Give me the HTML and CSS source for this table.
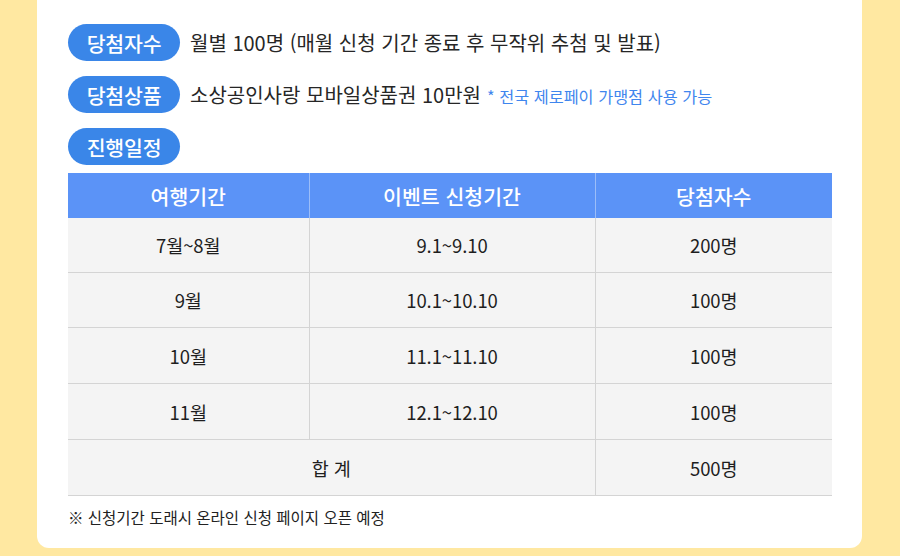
FILE: index.html
```html
<!DOCTYPE html>
<html lang="ko">
<head>
<meta charset="utf-8">
<link rel="stylesheet" href="styles.css">
</head>
<body>
<div class="card">
  <div class="info">
    <span class="badge">당첨자수</span>
    <span class="info-text">월별 100명 (매월 신청 기간 종료 후 무작위 추첨 및 발표)</span>
  </div>
  <div class="info">
    <span class="badge">당첨상품</span>
    <span class="info-text">소상공인사랑 모바일상품권 10만원</span>
    <span class="note">* 전국 제로페이 가맹점 사용 가능</span>
  </div>
  <div class="info last">
    <span class="badge">진행일정</span>
  </div>
  <table class="schedule">
    <colgroup>
      <col class="c1"><col class="c2"><col class="c3">
    </colgroup>
    <thead>
      <tr><th>여행기간</th><th>이벤트 신청기간</th><th>당첨자수</th></tr>
    </thead>
    <tbody>
      <tr class="r1"><td>7월~8월</td><td>9.1~9.10</td><td>200명</td></tr>
      <tr class="r2"><td>9월</td><td>10.1~10.10</td><td>100명</td></tr>
      <tr class="r3"><td>10월</td><td>11.1~11.10</td><td>100명</td></tr>
      <tr class="r4"><td>11월</td><td>12.1~12.10</td><td>100명</td></tr>
      <tr class="r5"><td colspan="2">합 계</td><td>500명</td></tr>
    </tbody>
  </table>
  <p class="foot">※ 신청기간 도래시 온라인 신청 페이지 오픈 예정</p>
</div>
</body>
</html>
```

FILE: styles.css
```css
html, body {
  margin: 0;
  padding: 0;
}
body {
  background: #ffe8a1;
  width: 900px;
  height: 556px;
  overflow: hidden;
  font-family: "Noto Sans CJK KR", "Noto Sans", sans-serif;
  color: #222;
}
.card {
  box-sizing: border-box;
  margin-left: 37px;
  width: 825px;
  height: 548px;
  background: #fff;
  border-radius: 0 0 12px 12px;
  padding: 24px 30px 0 31px;
}
.info {
  display: flex;
  align-items: center;
  height: 37px;
  margin-bottom: 15px;
}
.info.last {
  margin-bottom: 8px;
}
.badge {
  display: flex;
  align-items: center;
  justify-content: center;
  width: 112px;
  height: 37px;
  border-radius: 19px;
  background: #3a86e8;
  color: #fff;
  font-size: 20.5px;
  font-weight: 500;
  letter-spacing: -0.2px;
}
.info-text {
  margin-left: 10px;
  font-size: 20px;
  color: #262626;
  letter-spacing: 0;
}
.note {
  margin-left: 6px;
  font-size: 16.3px;
  color: #3f86ee;
  letter-spacing: 0;
  padding-top: 3px;
}
.schedule {
  width: 764px;
  border-collapse: collapse;
  table-layout: fixed;
}
.c1 { width: 241px; }
.c2 { width: 286px; }
.c3 { width: 237px; }
.schedule th {
  height: 45px;
  padding: 0;
  background: #5b93f7;
  color: #fff;
  font-size: 20.5px;
  font-weight: 500;
  border-left: 1px solid #9cbdf8;
  letter-spacing: 0;
}
.schedule th:first-child {
  border-left: none;
}
.schedule td {
  padding: 0;
  text-align: center;
  background: #f4f4f4;
  font-size: 18.5px;
  color: #1e1e1e;
  border-bottom: 1px solid #d4d4d4;
  border-left: 1px solid #d4d4d4;
  letter-spacing: -0.1px;
}
.schedule td:first-child {
  border-left: none;
}
.r1 td { height: 54px; }
.r2 td { height: 54px; }
.r3 td { height: 55px; }
.r4 td { height: 55px; }
.r5 td { height: 55px; }
.foot {
  margin: 10px 0 0;
  font-size: 15.5px;
  color: #222;
  letter-spacing: 0;
}
```
